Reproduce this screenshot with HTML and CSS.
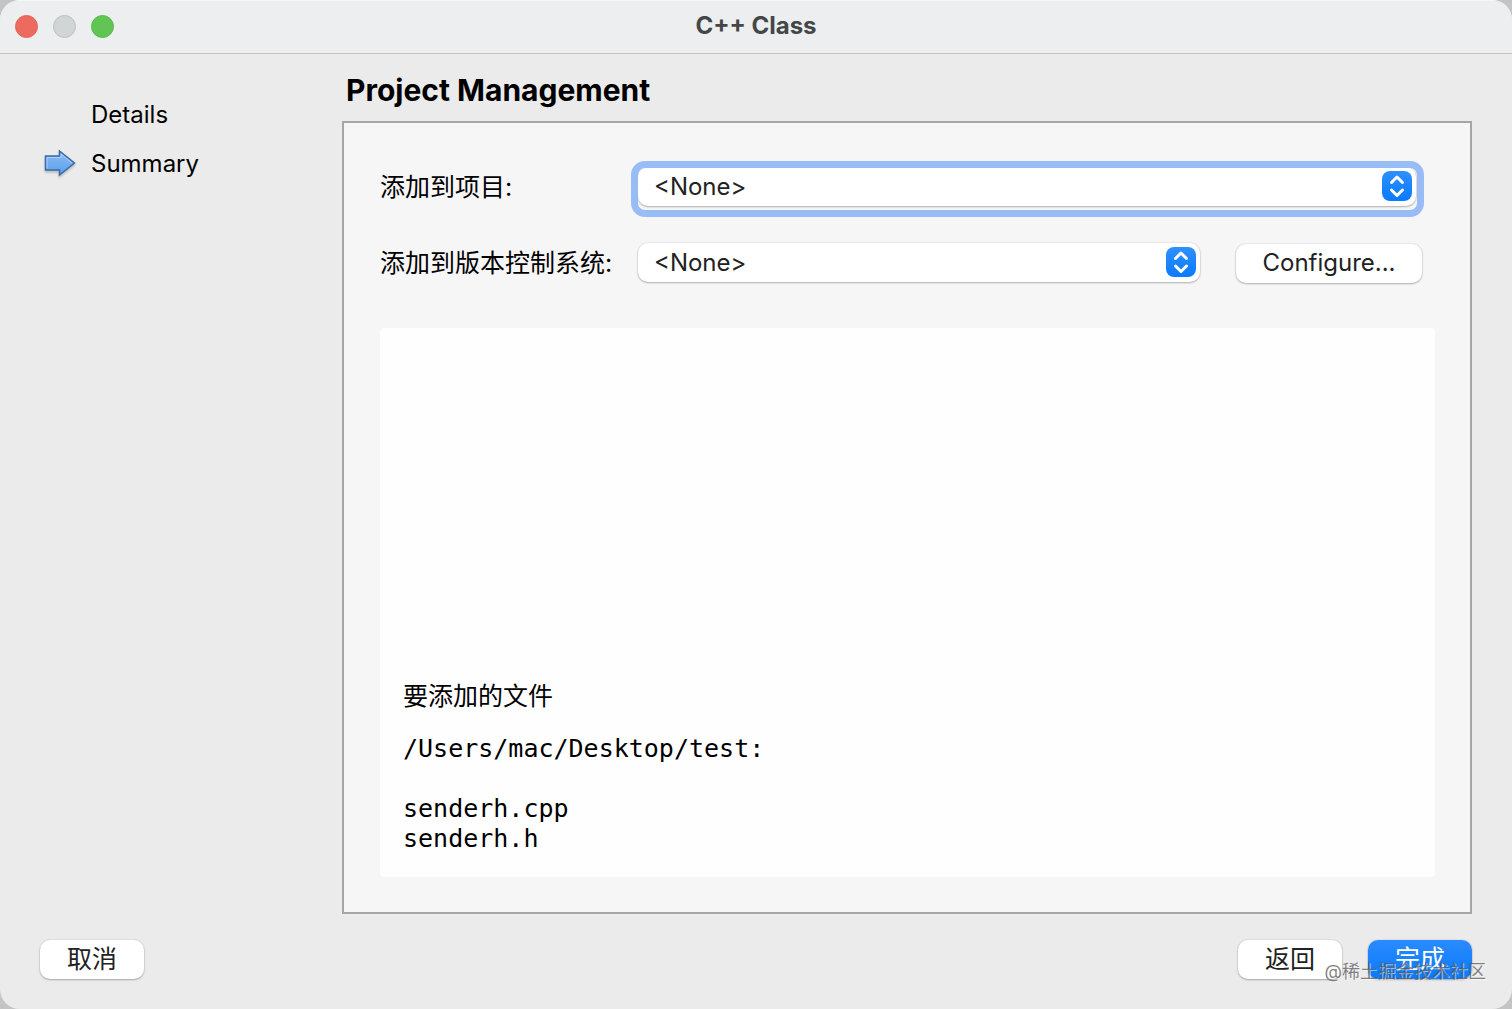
FILE: index.html
```html
<!DOCTYPE html>
<html lang="zh-CN">
<head>
    <meta charset="UTF-8">
    <meta name="viewport" content="width=device-width, initial-scale=1.0">
    <title>C++ Class</title>
    <link rel="stylesheet" href="styles.css">
</head>
<body>
    <div class="window">
        <header class="titlebar">
            <div class="lights">
                <button class="light close" type="button" aria-label="Close"></button>
                <button class="light minimize" type="button" aria-label="Minimize"></button>
                <button class="light zoom" type="button" aria-label="Zoom"></button>
            </div>
            <h1>C++ Class</h1>
        </header>

        <div class="content">
            <nav>
                <ol class="steps">
                    <li>Details</li>
                    <li class="current" aria-current="step">
                        <svg class="arrow" viewBox="0 0 32 30" aria-hidden="true">
                            <defs>
                                <linearGradient id="arrow-fill" x1="0" y1="0" x2="0" y2="1">
                                    <stop offset="0" stop-color="#8dbcf3"/>
                                    <stop offset="1" stop-color="#5b9fee"/>
                                </linearGradient>
                            </defs>
                            <path d="M1.5 7H15.5V2L30.5 14L15.5 26V21H1.5Z" fill="url(#arrow-fill)" stroke="#3a69a6" stroke-width="1.5"/>
                            <path d="M3 19.5V8.5H17V5L28 14" fill="none" stroke="#a9d0fb" stroke-width="1"/>
                        </svg>
                        Summary
                    </li>
                </ol>
            </nav>

            <main>
                <h2>Project Management</h2>
                <section class="panel">
                    <form class="fields">
                        <label for="project">添加到项目:</label>
                        <div class="popup focused">
                            <select id="project">
                                <option>&lt;None&gt;</option>
                            </select>
                            <svg class="stepper" viewBox="0 0 30 30" aria-hidden="true">
                                <path d="M9.5 11.5L15 6L20.5 11.5M9.5 19L15 24.5L20.5 19"/>
                            </svg>
                        </div>

                        <label for="vcs">添加到版本控制系统:</label>
                        <div class="popup">
                            <select id="vcs">
                                <option>&lt;None&gt;</option>
                            </select>
                            <svg class="stepper" viewBox="0 0 30 30" aria-hidden="true">
                                <path d="M9.5 11.5L15 6L20.5 11.5M9.5 19L15 24.5L20.5 19"/>
                            </svg>
                        </div>
                        <button class="btn configure" type="button">Configure...</button>
                    </form>

                    <div class="files">
                        <p>要添加的文件</p>
<pre>/Users/mac/Desktop/test:

senderh.cpp
senderh.h</pre>
                    </div>
                </section>
            </main>
        </div>

        <footer>
            <button class="btn" type="button">取消</button>
            <div class="actions">
                <button class="btn" type="button">返回</button>
                <button class="btn primary" type="button">完成</button>
            </div>
        </footer>

        <div class="watermark">@稀土掘金技术社区</div>
    </div>
</body>
</html>
```
FILE: styles.css
```css
* {
    box-sizing: border-box;
}
body {
    margin: 0;
    background-color: #c4c4c4;
    color: #000;
    font-family: Inter, "Noto Sans CJK SC", sans-serif;
    font-size: 25px;
    line-height: 30px;
}
h1, h2, p, pre, ol {
    margin: 0;
    padding: 0;
}
button, select {
    font: inherit;
}
.window {
    position: relative;
    display: flex;
    flex-direction: column;
    min-height: 100vh;
    background-color: #ebebeb;
    border-radius: 20px;
    overflow: hidden;
}

/* title bar */
.titlebar {
    display: grid;
    grid-template-columns: 1fr auto 1fr;
    align-items: center;
    height: 54px;
    padding: 0 15px 2px;
    background-color: #eceeef;
    border-top: 1px solid #f6f7f8;
    border-bottom: 1px solid #c2c3c4;
}
.titlebar h1 {
    font-size: 24px;
    font-weight: 700;
    color: #454647;
}
.lights {
    display: flex;
    gap: 15px;
}
.light {
    width: 23px;
    height: 23px;
    padding: 0;
    border: 1px solid;
    border-radius: 50%;
}
.close { background-color: #ec6a5e; border-color: #e0665c; }
.minimize { background-color: #d2d5d6; border-color: #bcbfc0; }
.zoom { background-color: #61c554; border-color: #5aba4e; }

/* wizard steps on the left, current page on the right */
.content {
    flex: 1;
    display: grid;
    grid-template-columns: 302px 1fr;
    gap: 40px;
    padding-right: 40px;
}
.steps {
    display: flex;
    flex-direction: column;
    gap: 19px;
    padding: 46px 0 0 44px;
    list-style: none;
    font-size: 24px;
}
.steps li {
    display: flex;
    align-items: center;
    padding-left: 47px;
}
.steps .current {
    gap: 15px;
    padding-left: 0;
}
.arrow {
    width: 32px;
    height: 30px;
    filter: drop-shadow(0 2px 1px rgba(0, 0, 0, 0.2));
}
main {
    display: flex;
    flex-direction: column;
}
h2 {
    padding: 18px 4px 13px;
    font-size: 30px;
    line-height: 36px;
    font-weight: 700;
}
.panel {
    flex: 1;
    display: flex;
    flex-direction: column;
    gap: 45px;
    padding: 44px 35px 35px 36px;
    background-color: #f6f6f6;
    border: 2px solid #a6a6a6;
}
.fields {
    display: grid;
    grid-template-columns: 222px 1fr 186px;
    align-items: center;
    gap: 36px;
    padding-right: 13px;
}
.fields label {
    white-space: nowrap;
}
.popup {
    position: relative;
    height: 40px;
}
.popup select {
    width: 100%;
    height: 39px;
    padding: 0 48px 0 16px;
    appearance: none;
    background-color: #fff;
    border: 0;
    border-radius: 10px;
    box-shadow: 0 0 1px 1px rgba(0, 0, 0, 0.05), 0 1px 2px rgba(0, 0, 0, 0.25);
    color: #222;
    font-size: 24px;
}
.focused {
    grid-column: 2 / 4;
    margin-right: 6px;
}
.focused::before {
    content: "";
    position: absolute;
    inset: -6px -8px -10px -7px;
    border: 7px solid #98bcf5;
    border-radius: 14px;
    pointer-events: none;
}
.stepper {
    position: absolute;
    top: 4px;
    right: 4px;
    width: 30px;
    height: 30px;
    border-radius: 8px;
    background: linear-gradient(#2e90ff, #0a7aff);
    fill: none;
    stroke: #fff;
    stroke-width: 3;
    stroke-linecap: round;
    stroke-linejoin: round;
    pointer-events: none;
}

/* push buttons */
.btn {
    min-width: 104px;
    height: 39px;
    padding: 0 0 2px;
    background-color: #fff;
    border: 0;
    border-radius: 10px;
    box-shadow: 0 0 1px 1px rgba(0, 0, 0, 0.05), 0 1px 2px rgba(0, 0, 0, 0.25);
    color: #222;
}
.configure {
    align-self: end;
    font-size: 24px;
}
.primary {
    background: linear-gradient(#2a8bff, #0a79fb);
    color: #fff;
}

.files {
    flex: 1;
    display: flex;
    flex-direction: column;
    justify-content: flex-end;
    gap: 23px;
    padding: 23px;
    background-color: #fefefe;
    border-radius: 4px;
}
.files pre {
    font-family: "DejaVu Sans Mono", monospace;
    font-size: 25px;
}

footer {
    display: flex;
    justify-content: space-between;
    padding: 26px 40px 30px;
}
.actions {
    display: flex;
    gap: 26px;
}
.watermark {
    position: absolute;
    right: 26px;
    bottom: 22px;
    color: rgba(90, 90, 90, 0.75);
    font-size: 18px;
    text-shadow: 1px 1px 0 rgba(255, 255, 255, 0.5);
    pointer-events: none;
}
```
